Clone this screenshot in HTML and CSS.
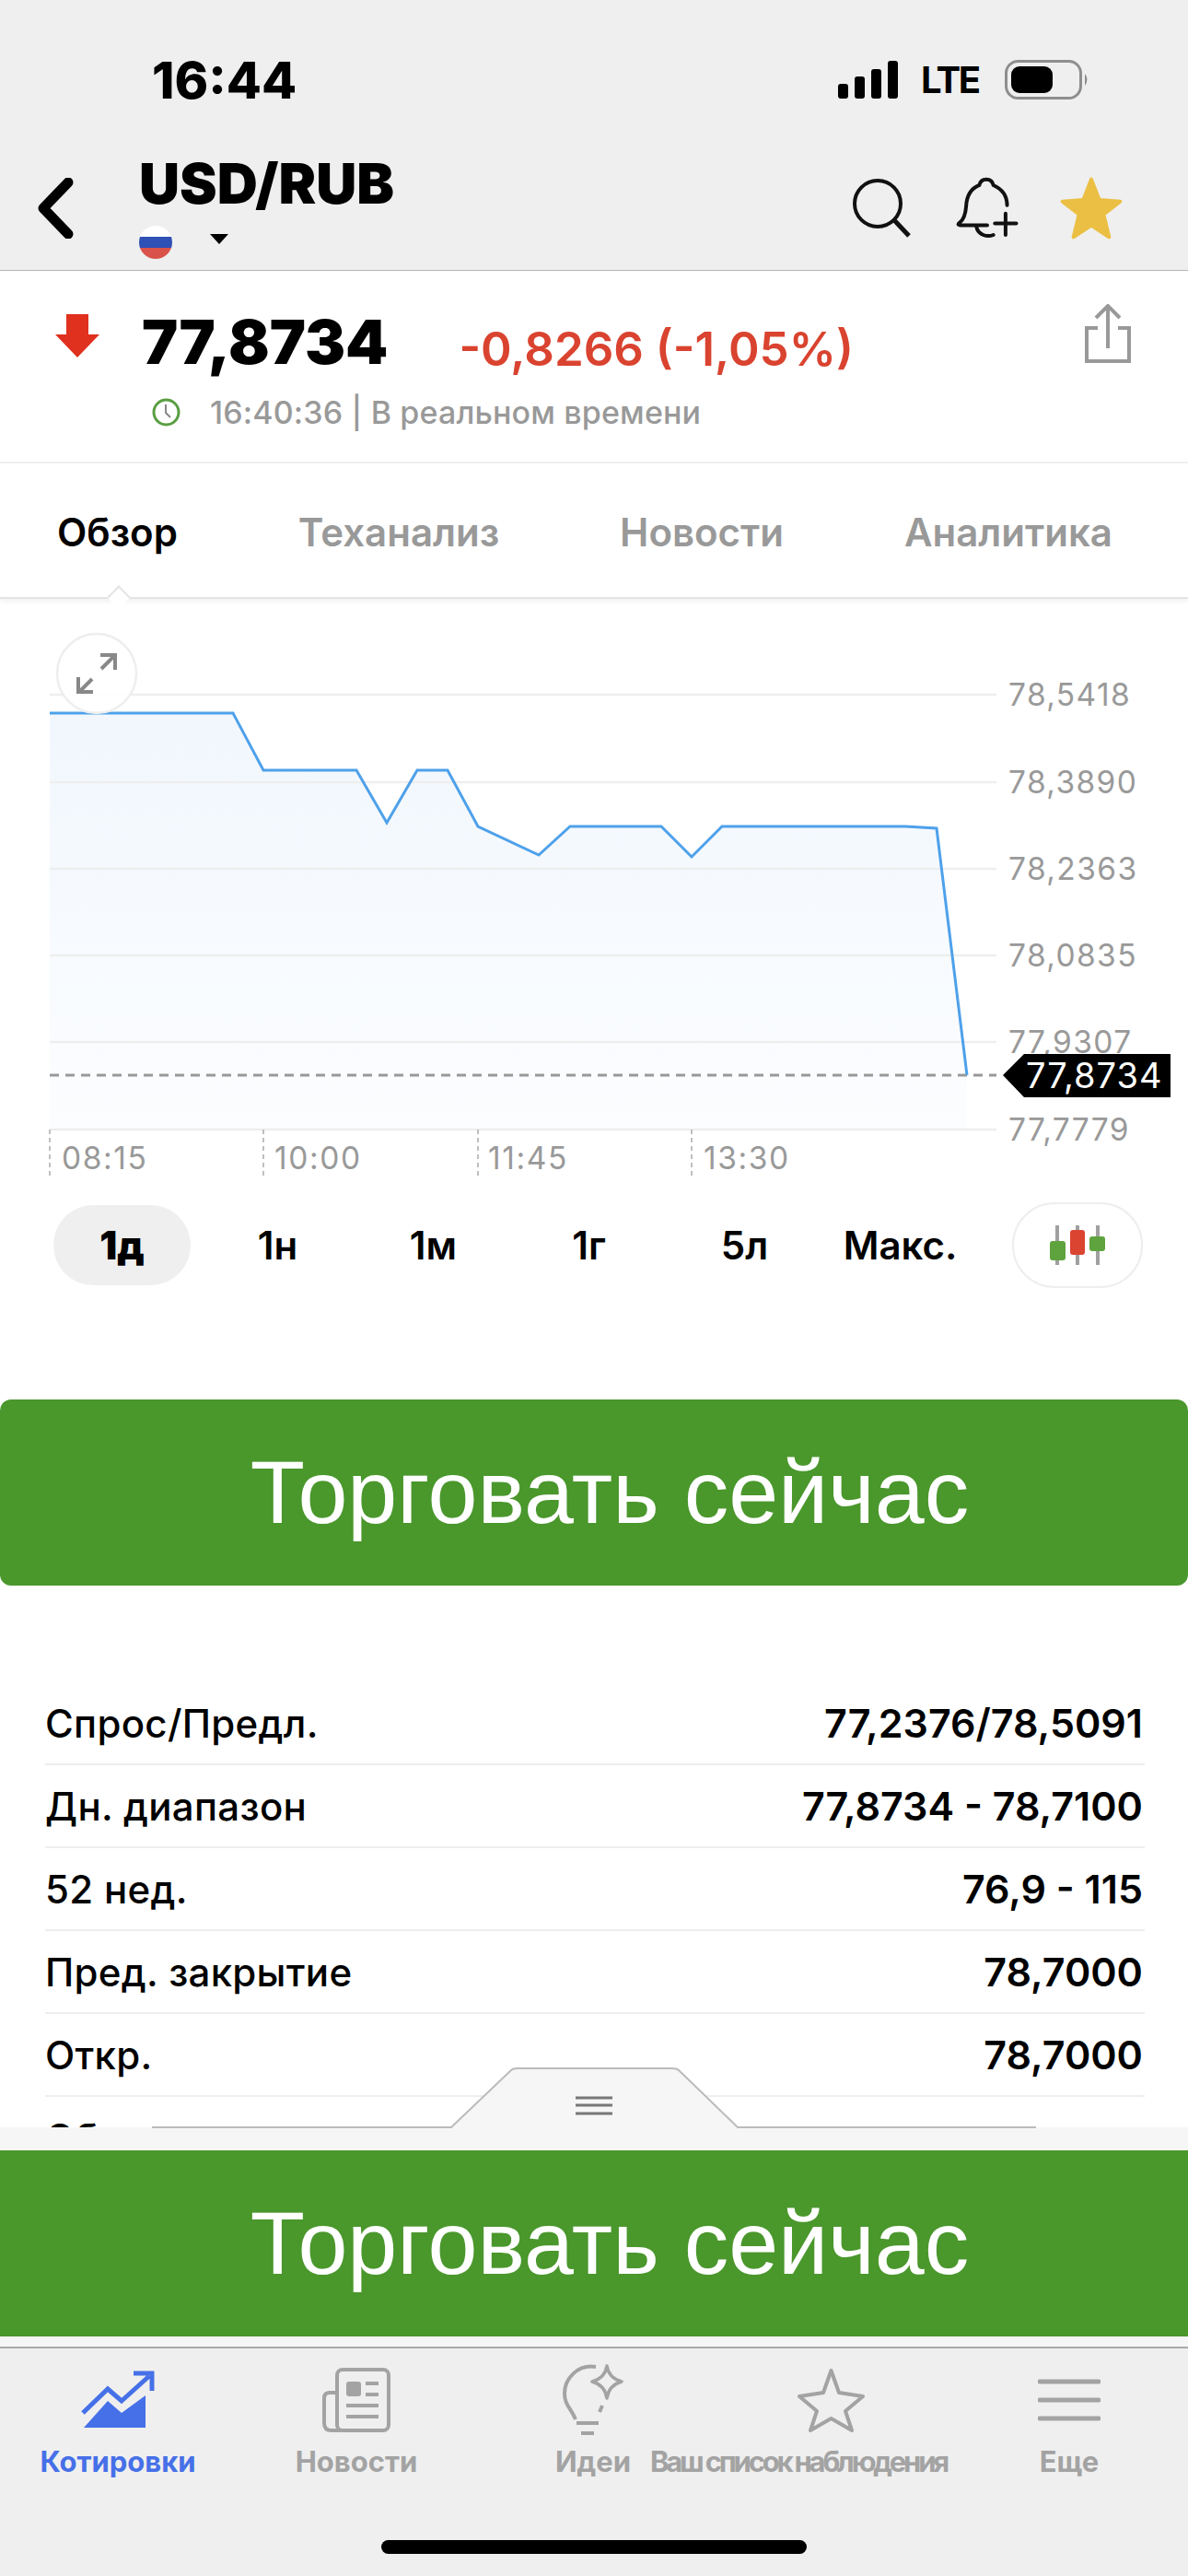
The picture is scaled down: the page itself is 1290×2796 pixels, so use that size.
FILE: index.html
```html
<!DOCTYPE html>
<html>

	<head>
		<meta charset="UTF-8">
		<title>USD/RUB</title>
		<link rel="stylesheet" href="styles.css">
	</head>

	<body>
		<header class="top">
			<div class="status">
				<span class="clock-time">16:44</span>
				<svg class="signal" viewBox="0 0 65 41">
					<rect x="0" y="25" width="11" height="16" rx="3"/>
					<rect x="18" y="17" width="11" height="24" rx="3"/>
					<rect x="36" y="9" width="11" height="32" rx="3"/>
					<rect x="54" y="0" width="11" height="41" rx="3"/>
				</svg>
				<span class="lte">LTE</span>
				<svg class="battery" viewBox="0 0 92 43">
					<rect x="1.5" y="1.5" width="81" height="40" rx="13" fill="none" stroke="#8e8e8e" stroke-width="3"/>
					<rect x="7" y="7" width="45" height="29" rx="9" fill="#000"/>
					<path d="M87 15 Q92 21 87 28 Z" fill="#8e8e8e"/>
				</svg>
			</div>
			<div class="nav">
				<svg class="back" viewBox="0 0 39 66">
					<path d="M33 5 L6 33 L33 61" fill="none" stroke="#000" stroke-width="11" stroke-linecap="round" stroke-linejoin="round"/>
				</svg>
				<div class="title">
					<h1>USD/RUB</h1>
					<div class="market">
						<span class="flag"></span>
						<span class="caret"></span>
					</div>
				</div>
				<div class="actions">
					<svg class="search" viewBox="0 0 64 66">
						<circle cx="28" cy="28" r="25" fill="none" stroke="#111" stroke-width="4"/>
						<path d="M46 46 L62 63" stroke="#111" stroke-width="5"/>
					</svg>
					<svg class="bell" viewBox="0 0 210 205">
						<path d="M170 93 C170 60 150 38 125 27 C122 12 112 8 102 8 C92 8 82 12 79 27 C52 38 38 60 36 95 C34 125 28 140 14 150 C8 155 10 158 18 158 H105 M70 165 C75 190 105 198 125 190 M165 120 V190 M130 152 H200" fill="none" stroke="#111" stroke-width="12" stroke-linecap="round"/>
					</svg>
					<svg class="star" viewBox="0 0 204 204">
						<path d="M102 8 L128 75 L196 80 L142 122 L160 196 L102 158 L44 196 L62 122 L8 80 L76 75 Z" fill="#ebbf43" stroke="#ebbf43" stroke-width="12" stroke-linejoin="round"/>
					</svg>
				</div>
			</div>
		</header>

		<section class="quote">
			<div class="quote-main">
				<svg class="down" viewBox="0 0 48 47">
					<path d="M12 0 H36 V22 H48 L24 47 L0 22 H12 Z" fill="#e0301e"/>
				</svg>
				<span class="price">77,8734</span>
				<span class="change">-0,8266 (-1,05%)</span>
				<svg class="share" viewBox="0 0 50 64">
					<path d="M25 48 V3 M12 15 L25 2 L38 15 M14 26 H2 V62 H48 V26 H36" fill="none" stroke="#999" stroke-width="4"/>
				</svg>
			</div>
			<div class="quote-time">
				<svg class="clock" viewBox="0 0 31 31">
					<circle cx="15.5" cy="15.5" r="13.5" fill="none" stroke="#5a9e43" stroke-width="3"/>
					<path d="M15 7 V16 L20 21" fill="none" stroke="#888" stroke-width="2"/>
				</svg>
				<span>16:40:36 | В реальном времени</span>
			</div>
		</section>

		<nav class="tabs">
			<a class="tab active">Обзор</a>
			<a class="tab">Теханализ</a>
			<a class="tab">Новости</a>
			<a class="tab">Аналитика</a>
		</nav>

		<main class="content">
			<svg class="chart" viewBox="0 650 1290 630">
				<defs>
					<linearGradient id="area" x1="0" y1="0" x2="0" y2="1">
						<stop offset="0" stop-color="#f1f7fd"/>
						<stop offset="1" stop-color="#fcfdff"/>
					</linearGradient>
				</defs>
				<path d="M54 774 H253 L286 836 H387 L420 893 L453 836 H486 L519 897 L585 928 L619 897 H718 L751 930 L784 897 H983 L1017 899 L1050 1167 V1226 H54 Z" fill="url(#area)"/>
				<g class="grid">
					<path d="M54 754 H1082"/>
					<path d="M54 849 H1082"/>
					<path d="M54 943 H1082"/>
					<path d="M54 1037 H1082"/>
					<path d="M54 1131 H1082"/>
					<path d="M54 1226 H1082"/>
				</g>
				<g class="ticks">
					<path d="M54 1226 V1277"/>
					<path d="M286 1226 V1277"/>
					<path d="M519 1226 V1277"/>
					<path d="M751 1226 V1277"/>
				</g>
				<path d="M54 1167 H1082" fill="none" stroke="#999" stroke-width="3" stroke-dasharray="10 7"/>
				<path d="M54 774 H253 L286 836 H387 L420 893 L453 836 H486 L519 897 L585 928 L619 897 H718 L751 930 L784 897 H983 L1017 899 L1050 1167" fill="none" stroke="#4ea1ea" stroke-width="3"/>
				<g class="axis values">
					<text x="1095" y="766">78,5418</text>
					<text x="1095" y="861">78,3890</text>
					<text x="1095" y="955">78,2363</text>
					<text x="1095" y="1049">78,0835</text>
					<text x="1095" y="1143">77,9307</text>
					<text x="1095" y="1238">77,7779</text>
				</g>
				<g class="axis times">
					<text x="67" y="1269">08:15</text>
					<text x="298" y="1269">10:00</text>
					<text x="530" y="1269">11:45</text>
					<text x="764" y="1269">13:30</text>
				</g>
				<path d="M1089 1167 L1112 1144 H1271 V1191 H1112 Z" fill="#000"/>
				<text class="tag" x="1114" y="1181">77,8734</text>
				<circle cx="105" cy="731" r="43" fill="#fff" fill-opacity=".9" stroke="#eee" stroke-width="2.5"/>
				<path d="M110 726 L124 712 M109 711 H125 V727 M100 737 L86 751 M85 735 V751 H101" fill="none" stroke="#888" stroke-width="4"/>
			</svg>

			<div class="ranges">
				<div class="range-list">
					<a class="range active">1д</a>
					<a class="range">1н</a>
					<a class="range">1м</a>
					<a class="range">1г</a>
					<a class="range">5л</a>
					<a class="range">Макс.</a>
				</div>
				<a class="candles">
					<svg viewBox="0 0 60 43">
						<path d="M8 0 V43 M30 0 V43 M52 0 V43" stroke="#a0a0a0" stroke-width="4"/>
						<rect x="0" y="17" width="17" height="21" rx="3" fill="#5fa33f"/>
						<rect x="22" y="5" width="16" height="27" rx="3" fill="#db4430"/>
						<rect x="43" y="12" width="17" height="16" rx="3" fill="#5fa33f"/>
					</svg>
				</a>
			</div>

			<a class="trade trade-round">Торговать сейчас</a>

			<div class="facts">
				<div class="fact"><span>Спрос/Предл.</span><b>77,2376/78,5091</b></div>
				<div class="fact"><span>Дн. диапазон</span><b>77,8734 - 78,7100</b></div>
				<div class="fact"><span>52 нед.</span><b>76,9 - 115</b></div>
				<div class="fact"><span>Пред. закрытие</span><b>78,7000</b></div>
				<div class="fact"><span>Откр.</span><b>78,7000</b></div>
				<div class="fact"><span>Объем</span></div>
			</div>
		</main>

		<div class="dock">
			<svg class="handle" viewBox="0 0 1290 66">
				<path d="M165 65 H490 L555 3 Q557 1 562 1 H730 Q735 1 737 3 L801 65 H1125" fill="#f6f6f6" stroke="#bbb" stroke-width="2"/>
				<path d="M625 33 H665 M625 41 H665 M625 50 H665" stroke="#777" stroke-width="3"/>
			</svg>
			<a class="trade">Торговать сейчас</a>
		</div>

		<footer class="bar">
			<div class="bar-items">
				<a class="bar-item active">
					<span class="bar-icon">
						<svg width="80" height="64" viewBox="0 0 80 64">
							<path d="M3 62 L29 33 L44 46 L70 27 V62 Z" fill="#4670e8"/>
							<path d="M2 46 L29 20 L44 33 L74 6 M57 3 H77 V22" fill="none" stroke="#4670e8" stroke-width="5"/>
						</svg>
					</span>
					<span>Котировки</span>
				</a>
				<a class="bar-item">
					<span class="bar-icon">
						<svg width="74" height="70" viewBox="0 0 74 70">
							<rect x="16" y="2" width="56" height="66" rx="6" fill="none" stroke="#a3a3a3" stroke-width="4"/>
							<path d="M16 27 H8 Q2 27 2 33 V60 Q2 68 10 68 H20" fill="none" stroke="#a3a3a3" stroke-width="4"/>
							<rect x="26" y="15" width="16" height="16" rx="3" fill="#a3a3a3"/>
							<path d="M47 17 H61 M47 29 H61 M26 41 H61 M26 53 H61" stroke="#a3a3a3" stroke-width="4"/>
						</svg>
					</span>
					<span>Новости</span>
				</a>
				<a class="bar-item">
					<span class="bar-icon">
						<svg width="66" height="78" viewBox="0 0 66 78">
							<path d="M36 3 C16 0 2 16 2 32 C2 44 9 48 14 60 M43 45 L40 52 M15 64 H39 M20 75 H34" fill="none" stroke="#a3a3a3" stroke-width="4"/>
							<path d="M48 2 Q50 15 64 19 Q50 23 48 37 Q46 23 32 19 Q46 15 48 2 Z" fill="none" stroke="#a3a3a3" stroke-width="3.5" stroke-linejoin="round"/>
						</svg>
					</span>
					<span>Идеи</span>
				</a>
				<a class="bar-item watch">
					<span class="bar-icon">
						<svg width="73" height="71" viewBox="0 0 73 71">
							<path d="M36.5 3 L45 27 L71 31 L52 47 L59 68 L36.5 55 L14 68 L21 47 L2 31 L28 27 Z" fill="none" stroke="#a3a3a3" stroke-width="4" stroke-linejoin="round"/>
						</svg>
					</span>
					<span>Ваш список наблюдения</span>
				</a>
				<a class="bar-item more">
					<span class="bar-icon">
						<svg width="68" height="46" viewBox="0 0 68 46">
							<path d="M2 3 H66 M2 23 H66 M2 43 H66" stroke="#a3a3a3" stroke-width="5" stroke-linecap="round"/>
						</svg>
					</span>
					<span>Еще</span>
				</a>
			</div>
			<div class="home"></div>
		</footer>
	</body>

</html>
```

FILE: styles.css
```css
* {
	margin: 0;
	padding: 0;
	box-sizing: border-box;
}

body {
	width: 1290px;
	height: 2796px;
	overflow: hidden;
	display: flex;
	flex-direction: column;
	background: #fff;
	color: #000;
	font-family: Inter, "Liberation Sans", sans-serif;
}

svg {
	display: block;
	flex: none;
}

/* header */
.top {
	height: 294px;
	padding-top: 66px;
	background: #efefef;
	border-bottom: 1px solid #b5b5b5;
}

.status {
	display: flex;
	align-items: center;
	height: 41px;
	padding-left: 165px;
}

.clock-time {
	font-size: 55.5px;
	font-weight: 800;
	width: 745px;
}

.signal {
	width: 65px;
	height: 41px;
}

.lte {
	margin-left: 25px;
	width: 91px;
	font-size: 40px;
	font-weight: 700;
	letter-spacing: -2.5px;
}

.battery {
	width: 92px;
	height: 43px;
}

.nav {
	display: flex;
	align-items: center;
	height: 110px;
	margin-top: 64px;
	padding-left: 41px;
}

.back {
	width: 39px;
	height: 66px;
}

.title {
	margin-left: 71px;
}

.title h1 {
	font-size: 61px;
	line-height: 56px;
	font-weight: 900;
}

.market {
	display: flex;
	align-items: center;
	margin-top: 18px;
}

.flag {
	width: 36px;
	height: 36px;
	border-radius: 50%;
	background: linear-gradient(#fff 0 33%, #2f50b5 33% 66%, #d9534a 66%);
}

.caret {
	margin-left: 41px;
	margin-bottom: 8px;
	border-left: 10px solid transparent;
	border-right: 10px solid transparent;
	border-top: 11px solid #000;
}

.actions {
	display: flex;
	align-items: center;
	margin-left: auto;
	padding-right: 71px;
}

.search {
	width: 64px;
	height: 66px;
}

.bell {
	width: 70px;
	height: 68px;
	margin-left: 48px;
}

.star {
	width: 68px;
	height: 68px;
	margin-left: 44px;
}

/* price block */
.quote {
	height: 209px;
	padding-top: 36px;
	border-bottom: 2px solid #f0f0f0;
}

.quote-main {
	display: flex;
	align-items: flex-start;
	padding: 0 62px 0 60px;
}

.down {
	width: 48px;
	height: 47px;
	margin-top: 11px;
}

.price {
	margin-left: 46px;
	margin-top: 1px;
	font-size: 66px;
	line-height: 80px;
	font-weight: 900;
}

.change {
	margin-left: 77px;
	margin-top: 9px;
	font-size: 51px;
	line-height: 80px;
	font-weight: 600;
	color: #d9432f;
}

.share {
	width: 50px;
	height: 64px;
	margin-left: auto;
}

.quote-time {
	display: flex;
	align-items: center;
	margin-top: 8px;
	padding-left: 165px;
	font-size: 34px;
	font-weight: 500;
	letter-spacing: .15px;
	color: #999;
}

.clock {
	width: 31px;
	height: 31px;
	margin-right: 32px;
}

/* tabs */
.tabs {
	position: relative;
	display: flex;
	align-items: center;
	justify-content: space-between;
	height: 147px;
	padding: 3px 82px 0 62px;
	border-bottom: 2px solid #e4e4e4;
	box-shadow: 0 3px 5px rgba(0, 0, 0, .06);
	font-size: 42px;
	font-weight: 600;
	color: #999;
}

.tab.active {
	color: #000;
}

.tabs::after {
	content: "";
	position: absolute;
	left: 120px;
	bottom: -9px;
	width: 16px;
	height: 16px;
	background: #fff;
	border-left: 2px solid #e4e4e4;
	border-top: 2px solid #e4e4e4;
	transform: rotate(45deg);
}

/* body */
.content {
	flex: 1;
	min-height: 0;
	overflow: hidden;
}

.chart {
	width: 1290px;
	height: 630px;
}

.grid path {
	fill: none;
	stroke: #eeeeee;
	stroke-width: 2.5;
}

.ticks path {
	fill: none;
	stroke: #aaa;
	stroke-width: 1.5;
	stroke-dasharray: 5 4;
}

.axis text {
	font-size: 33.5px;
	fill: #999;
}

.values text {
	letter-spacing: 1.4px;
}

.times text {
	letter-spacing: 1.6px;
}

.tag {
	font-size: 38px;
	letter-spacing: 1px;
	fill: #fff;
}

.ranges {
	display: flex;
	align-items: center;
	padding: 25px 49px 0 48px;
}

.range-list {
	display: grid;
	grid-template-columns: repeat(6, 169px);
	font-size: 42px;
	font-weight: 600;
}

.range {
	display: flex;
	align-items: center;
	justify-content: center;
	height: 87px;
	margin: 0 10px;
	white-space: nowrap;
}

.range.active {
	background: #efefef;
	border-radius: 44px;
	font-weight: 900;
}

.candles {
	display: flex;
	align-items: center;
	justify-content: center;
	width: 142px;
	height: 93px;
	margin-left: auto;
	border: 2px solid #eee;
	border-radius: 46px;
}

.candles svg {
	width: 60px;
	height: 43px;
}

.trade {
	display: flex;
	align-items: center;
	justify-content: center;
	height: 202px;
	padding-left: 34px;
	background: #4a972c;
	color: #fff;
	font-family: "Liberation Sans", Arial, sans-serif;
	font-size: 97px;
}

.trade-round {
	margin-top: 121px;
	border-radius: 12px;
}

.facts {
	margin: 105px 47px 0 49px;
}

.fact {
	display: flex;
	align-items: center;
	justify-content: space-between;
	height: 90px;
	padding-right: 2px;
	border-bottom: 2px solid #eee;
	font-size: 42px;
	font-weight: 500;
	letter-spacing: .3px;
}

.fact b {
	font-size: 43px;
	font-weight: 600;
	letter-spacing: 0;
}

/* bottom */
.dock {
	position: relative;
	height: 238px;
	padding-top: 25px;
	background: #f6f6f6;
}

.handle {
	position: absolute;
	left: 0;
	top: -65px;
	width: 1290px;
	height: 66px;
}

.bar {
	display: flex;
	flex-direction: column;
	height: 249px;
	padding-top: 16px;
	background: #efefef;
	border-top: 2px solid #aaa;
}

.bar-items {
	display: grid;
	grid-template-columns: 256px 262px 252px 194px 1fr;
	font-size: 31px;
	font-weight: 700;
	color: #a3a3a3;
}

.bar-item {
	display: flex;
	flex-direction: column;
	align-items: center;
	white-space: nowrap;
}

.bar-item.active {
	color: #4670e8;
}

.bar-icon {
	display: flex;
	align-items: center;
	justify-content: center;
	height: 80px;
	margin-bottom: 8px;
}

.watch {
	letter-spacing: -3.2px;
}

.watch .bar-icon {
	margin-left: 70px;
}

.more {
	padding-left: 68px;
}

.home {
	width: 462px;
	height: 15px;
	margin: auto auto 24px;
	background: #000;
	border-radius: 8px;
}
```
